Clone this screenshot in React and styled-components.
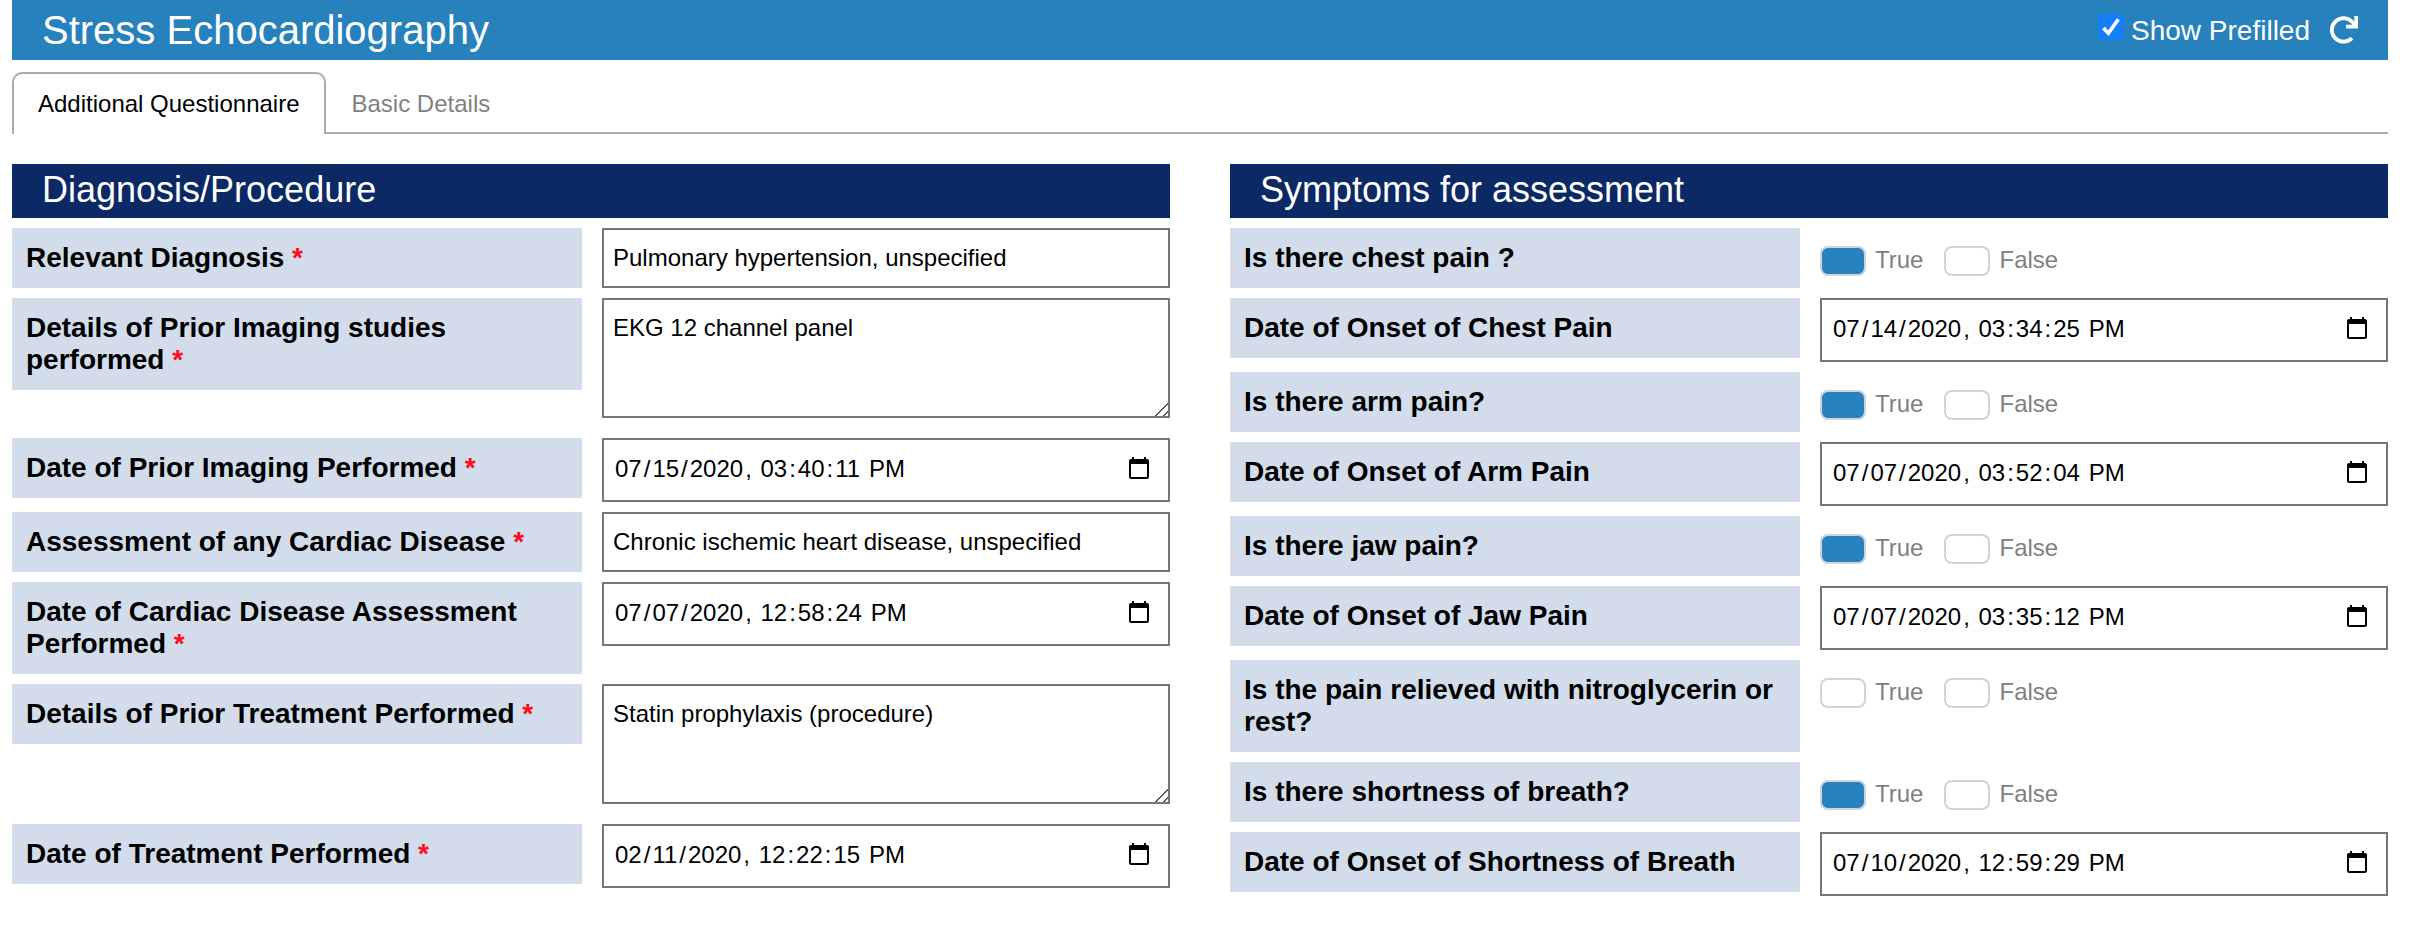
import React, { useId, useState } from "react";
import styled, { createGlobalStyle } from "styled-components";

const GlobalStyle = createGlobalStyle`
  *, *::before, *::after { box-sizing: border-box; }
  body {
    margin: 0;
    background: #fff;
    color: #000;
    font-family: "Liberation Sans", Arial, sans-serif;
  }
`;

const Page = styled.div`
  padding: 0 42px 36px 12px;
`;

const TopBar = styled.header`
  display: flex;
  align-items: center;
  justify-content: space-between;
  min-height: 60px;
  padding: 0 30px;
  background: #2781bd;
  color: #fff;
`;

const Title = styled.h1`
  margin: 0;
  font-size: 40px;
  line-height: 46px;
  font-weight: 400;
`;

const Actions = styled.div`
  display: flex;
  align-items: center;
  gap: 20px;
`;

const PrefillLabel = styled.label`
  display: flex;
  align-items: center;
  gap: 7px;
  padding-top: 2px;
  font-size: 28px;
  line-height: 32px;
`;

const PrefillBox = styled.span`
  display: grid;
  margin-bottom: 8px;

  > * { grid-area: 1 / 1; }
  > svg { pointer-events: none; }
`;

const PrefillInput = styled.input`
  appearance: none;
  width: 26px;
  height: 26px;
  margin: 0;
  border: 1px solid #fff;
  border-radius: 4px;
  background: #fff;

  &:checked { border-color: #157efb; background: #157efb; }
`;

const RefreshButton = styled.button`
  display: flex;
  padding: 0;
  border: 0;
  background: none;
  color: inherit;
`;

const TabList = styled.div`
  display: flex;
  margin-top: 12px;
  border-bottom: 2px solid #aaa;
`;

const Tab = styled.button`
  margin-bottom: -2px;
  padding: 17px 24px;
  border: 2px solid ${(p) => (p.$active ? "#aaa" : "transparent")};
  border-bottom: 0;
  border-radius: 10px 10px 0 0;
  background: ${(p) => (p.$active ? "#fff" : "none")};
  color: ${(p) => (p.$active ? "#000" : "#808080")};
  font: 24px/26px "Liberation Sans", Arial, sans-serif;
`;

const Columns = styled.main`
  display: grid;
  grid-template-columns: repeat(2, minmax(0, 1fr));
  align-items: start;
  gap: 60px;
  margin-top: 30px;
`;

const Section = styled.section`
  display: flex;
  flex-direction: column;
  gap: 10px;
`;

const SectionTitle = styled.h2`
  margin: 0;
  padding: 6px 30px 8px;
  background: #0b2965;
  color: #fff;
  font-size: 36px;
  line-height: 40px;
  font-weight: 400;
`;

const FieldRow = styled.div`
  display: grid;
  grid-template-columns: calc(50% - 9px) minmax(0, 1fr);
  align-items: start;
  column-gap: 20px;
  padding-bottom: ${(p) => (p.$roomy ? "10px" : "0")};
`;

const FieldLabel = styled.label`
  display: block;
  padding: 14px;
  background: #d3dcea;
  font-size: 28px;
  line-height: 32px;
  font-weight: 700;
`;

const Required = styled.span`
  color: #fc0d1b;
`;

const TextInput = styled.input`
  width: 100%;
  height: 60px;
  padding: 0 9px;
  border: 2px solid #767676;
  border-radius: 0;
  background: #fff;
  color: #000;
  font: 24px/28px "Liberation Sans", Arial, sans-serif;
`;

const DateInput = styled(TextInput)`
  height: 64px;
  padding-bottom: 2px;

  &::-webkit-datetime-edit-fields-wrapper { padding: 0; }
  &::-webkit-datetime-edit-month-field,
  &::-webkit-datetime-edit-day-field,
  &::-webkit-datetime-edit-year-field,
  &::-webkit-datetime-edit-hour-field,
  &::-webkit-datetime-edit-minute-field,
  &::-webkit-datetime-edit-second-field,
  &::-webkit-datetime-edit-ampm-field { padding: 0 2px; }
  &::-webkit-calendar-picker-indicator {
    width: 26px;
    height: 26px;
    margin-right: 7px;
    padding: 0;
  }
`;

const TextBox = styled.textarea`
  display: block;
  width: 100%;
  height: 120px;
  padding: 14px 9px;
  border: 2px solid #767676;
  border-radius: 0;
  background: #fff;
  color: #000;
  font: 24px/28px "Liberation Sans", Arial, sans-serif;
  resize: vertical;

  &::-webkit-scrollbar { width: 18px; height: 18px; }
  &::-webkit-resizer {
    background: linear-gradient(
      135deg,
      transparent 48%,
      #555 48%, #555 54%,
      transparent 54%, transparent 76%,
      #555 76%, #555 82%,
      transparent 82%
    ) 1px 1px / 15px 15px no-repeat;
  }
`;

const Choices = styled.div`
  display: flex;
  gap: 21px;
  padding-top: 18px;
`;

const Choice = styled.label`
  display: flex;
  gap: 9px;
  color: #808080;
  font-size: 24px;
  line-height: 28px;
`;

const ChoiceInput = styled.input`
  appearance: none;
  width: 46px;
  height: 30px;
  margin: 0;
  border: 2px solid #d3d3d3;
  border-radius: 8px;
  background: #fff;

  &:checked { background: #2781bd; }
`;

const diagnosisFields = [
  { label: "Relevant Diagnosis", type: "text", value: "Pulmonary hypertension, unspecified" },
  { label: "Details of Prior Imaging studies performed", type: "area", value: "EKG 12 channel panel" },
  { label: "Date of Prior Imaging Performed", type: "date", value: "2020-07-15T15:40:11" },
  { label: "Assessment of any Cardiac Disease", type: "text", value: "Chronic ischemic heart disease, unspecified" },
  { label: "Date of Cardiac Disease Assessment Performed", type: "date", value: "2020-07-07T12:58:24" },
  { label: "Details of Prior Treatment Performed", type: "area", value: "Statin prophylaxis (procedure)" },
  { label: "Date of Treatment Performed", type: "date", value: "2020-02-11T12:22:15" },
];

const symptomFields = [
  { label: "Is there chest pain ?", type: "bool", value: true },
  { label: "Date of Onset of Chest Pain", type: "date", value: "2020-07-14T15:34:25" },
  { label: "Is there arm pain?", type: "bool", value: true },
  { label: "Date of Onset of Arm Pain", type: "date", value: "2020-07-07T15:52:04" },
  { label: "Is there jaw pain?", type: "bool", value: true },
  { label: "Date of Onset of Jaw Pain", type: "date", value: "2020-07-07T15:35:12" },
  { label: "Is the pain relieved with nitroglycerin or rest?", type: "bool", value: null },
  { label: "Is there shortness of breath?", type: "bool", value: true },
  { label: "Date of Onset of Shortness of Breath", type: "date", value: "2020-07-10T12:59:29" },
];

function BooleanField({ id, value }) {
  return (
    <Choices role="radiogroup" aria-labelledby={`${id}-label`}>
      <Choice>
        <ChoiceInput type="radio" name={id} defaultChecked={value === true} />
        True
      </Choice>
      <Choice>
        <ChoiceInput type="radio" name={id} defaultChecked={value === false} />
        False
      </Choice>
    </Choices>
  );
}

function Field({ label, type, value, required }) {
  const id = useId();
  return (
    <FieldRow $roomy={type === "area"}>
      <FieldLabel
        id={`${id}-label`}
        as={type === "bool" ? "span" : "label"}
        htmlFor={type === "bool" ? undefined : id}
      >
        {label}
        {required && <Required> *</Required>}
      </FieldLabel>
      {type === "text" && <TextInput id={id} type="text" defaultValue={value} />}
      {type === "area" && <TextBox id={id} defaultValue={value} />}
      {type === "date" && <DateInput id={id} type="datetime-local" step="1" defaultValue={value} />}
      {type === "bool" && <BooleanField id={id} value={value} />}
    </FieldRow>
  );
}

export default function App() {
  const [tab, setTab] = useState(0);
  return (
    <Page>
      <GlobalStyle />
      <TopBar>
        <Title>Stress Echocardiography</Title>
        <Actions>
          <PrefillLabel>
            <PrefillBox>
              <PrefillInput type="checkbox" defaultChecked />
              <svg width="26" height="26" viewBox="0 0 26 26" fill="none" stroke="#fff" strokeWidth="3.6">
                <path d="M5.4 14 10.4 19.2 20.4 5.2" />
              </svg>
            </PrefillBox>
            Show Prefilled
          </PrefillLabel>
          <RefreshButton type="button" aria-label="Refresh">
            <svg width="28" height="28" viewBox="0 0 28 28" fill="none" stroke="currentColor" strokeWidth="3.8">
              <path d="M22 22.2A11.8 11.8 0 1 1 22.4 6L25.4 9.4" />
              <path d="M16 10.6h10.2V0" />
            </svg>
          </RefreshButton>
        </Actions>
      </TopBar>
      <TabList role="tablist">
        {["Additional Questionnaire", "Basic Details"].map((name, i) => (
          <Tab key={name} type="button" role="tab" aria-selected={tab === i} $active={tab === i} onClick={() => setTab(i)}>
            {name}
          </Tab>
        ))}
      </TabList>
      <Columns>
        <Section>
          <SectionTitle>Diagnosis/Procedure</SectionTitle>
          {diagnosisFields.map((f) => <Field key={f.label} required {...f} />)}
        </Section>
        <Section>
          <SectionTitle>Symptoms for assessment</SectionTitle>
          {symptomFields.map((f) => <Field key={f.label} {...f} />)}
        </Section>
      </Columns>
    </Page>
  );
}
